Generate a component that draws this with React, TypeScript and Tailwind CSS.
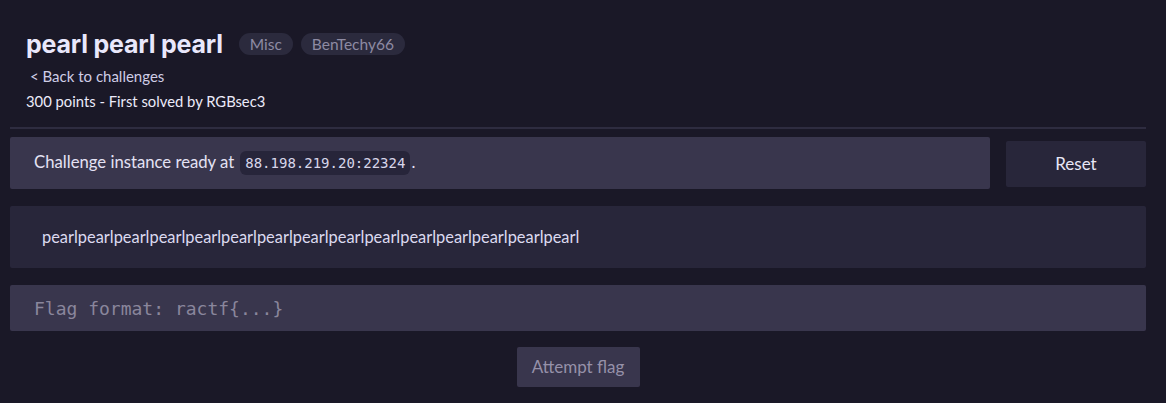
const pearls = Array.from({ length: 15 }, () => "pearl").join("");

const App = () => {
  return (
    <div className="min-h-screen bg-[#1a1827] pl-[10px] pr-[20px] font-['Lato','Noto_Sans',sans-serif] text-[#e4e2f4]">
      <div className="pl-[16px] pt-[28px] pb-[16px]">
        <div className="flex items-center">
          <h1 className="font-['Inter',sans-serif] text-[25px] font-bold leading-[32px] tracking-[-0.2px] text-[#e9e7fb]">
            pearl pearl pearl
          </h1>
          <div className="ml-[16px] flex gap-[8px]">
            <span className="rounded-full bg-[#2b2a3d] px-[11px] text-[15.5px] leading-[22px] text-[#8e8ba3]">Misc</span>
            <span className="rounded-full bg-[#2b2a3d] px-[11px] text-[15.5px] leading-[22px] text-[#8e8ba3]">BenTechy66</span>
          </div>
        </div>
        <div className="mt-[5px] pl-[4px] text-[15px] leading-[22px] text-[#cfcde6]">&lt; Back to challenges</div>
        <div className="mt-[4px] text-[14.8px] leading-[20px] text-[#ecebfa]">300 points - First solved by RGBsec3</div>
      </div>
      <div className="h-[2px] bg-[#2e2c40]" />
      <div className="mt-[8px] flex items-start gap-[16px]">
        <div className="flex h-[52px] flex-1 items-center rounded-[2px] bg-[#39364d] pl-[24px] text-[16.7px] text-[#e4e2f4]">
          Challenge instance ready at
          <code className="ml-[6px] rounded-[6px] bg-[#27253a] px-[5px] font-['DejaVu_Sans_Mono',monospace] text-[14px] leading-[24px] text-[#d8d6ea]">
            88.198.219.20:22324
          </code>
          <span className="ml-[1px]">.</span>
        </div>
        <button className="mt-[4px] h-[46px] w-[140px] rounded-[2px] bg-[#28263a] text-[17px] text-[#e8e6f6]">Reset</button>
      </div>
      <div className="mt-[17px] flex h-[62px] items-center rounded-[2px] bg-[#28263a] pl-[32px] text-[16.4px] text-[#dcdaf0]">
        {pearls}
      </div>
      <div className="mt-[17px] flex h-[46px] items-center rounded-[2px] bg-[#39364d] pl-[24px] font-['DejaVu_Sans_Mono',monospace] text-[18px] text-[#8a869c]">
        Flag format: ractf&#123;...&#125;
      </div>
      <div className="mt-[16px] flex justify-center">
        <button className="h-[40px] w-[123px] rounded-[2px] bg-[#39364d] text-[17px] text-[#9691a9]">Attempt flag</button>
      </div>
    </div>
  );
};

export default App;
